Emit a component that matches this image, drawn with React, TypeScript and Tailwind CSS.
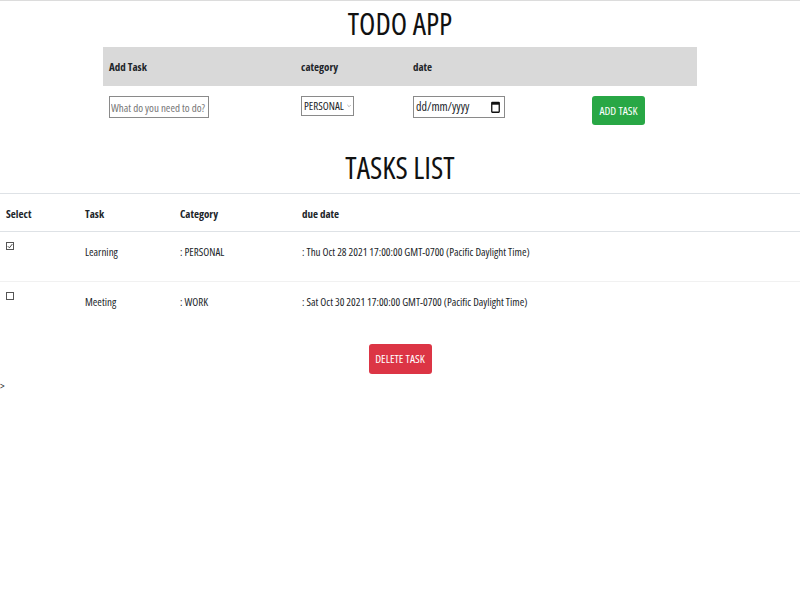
import { useState } from "react";

const font = { fontFamily: '"Open Sans", "DejaVu Sans Condensed", sans-serif' };

interface Task {
  id: number;
  name: string;
  category: string;
  due: string;
  done: boolean;
}

const initial: Task[] = [
  { id: 1, name: "Learning", category: "PERSONAL", due: "Thu Oct 28 2021 17:00:00 GMT-0700 (Pacific Daylight Time)", done: true },
  { id: 2, name: "Meeting", category: "WORK", due: "Sat Oct 30 2021 17:00:00 GMT-0700 (Pacific Daylight Time)", done: false },
];

export default function App() {
  const [tasks, setTasks] = useState(initial);

  return (
    <div className="min-h-[600px] bg-white text-[11px] text-[#212529] font-stretch-condensed" style={font}>
      <div className="border-t border-[#dcdcdc]" />

      {/* Add task form */}
      <h1 className="mt-[3px] text-center text-[30px] leading-[40px] text-[#111]">TODO APP</h1>
      <div className="mx-auto mt-[3px] w-[594px]">
        <div className="grid h-[39px] grid-cols-[192px_112px_179px_1fr] items-center bg-[#d9d9d9] px-[6px] pt-[2px] font-bold">
          <span>Add Task</span>
          <span>category</span>
          <span>date</span>
          <span />
        </div>
        <div className="grid grid-cols-[192px_112px_179px_1fr] items-start px-[6px] pt-[10px]">
          <input
            placeholder="What do you need to do?"
            className="h-[22px] w-[100px] border border-[#8a8a8a] px-[1px] text-[11px] font-stretch-condensed placeholder:text-[#767676]"
          />
          <div className="flex h-[20px] w-[53px] items-center gap-[3px] border border-[#8a8a8a] px-[2px]">
            <span>PERSONAL</span>
            <svg width="6" height="4" viewBox="0 0 6 4">
              <path d="M0.5 0.5 L3 3 L5.5 0.5" fill="none" stroke="#888" strokeWidth="0.9" />
            </svg>
          </div>
          <div className="flex h-[22px] w-[92px] items-center justify-between border border-[#8a8a8a] pl-[2px] pr-[4px]">
            <span className="text-[12px]">dd/mm/yyyy</span>
            <svg width="9" height="12" viewBox="0 0 9 12">
              <rect x="0.75" y="1.5" width="7.5" height="9.75" rx="0.5" fill="none" stroke="#111" strokeWidth="1.3" />
              <rect x="0.75" y="1.5" width="7.5" height="2.2" fill="#111" />
            </svg>
          </div>
          <button className="h-[29px] w-[53px] rounded-[3px] bg-[#28a745] text-[11.5px] text-white">ADD TASK</button>
        </div>
      </div>

      {/* Tasks table */}
      <h2 className="mt-[23px] text-center text-[30px] leading-[40px] text-[#111]">TASKS LIST</h2>
      <div className="mt-[5px] border-t border-[#dee2e6]">
        <div className="grid h-[38px] grid-cols-[79px_95px_122px_1fr] items-center border-b border-[#dee2e6] px-[6px] pt-[3px] font-bold">
          <span>Select</span>
          <span>Task</span>
          <span>Category</span>
          <span>due date</span>
        </div>
        {tasks.map((t) => (
          <div key={t.id} className="grid h-[50px] grid-cols-[79px_95px_122px_1fr] border-b border-[#f1f1f1] px-[6px] last:border-b-0">
            <button
              onClick={() => setTasks(tasks.map((x) => (x.id === t.id ? { ...x, done: !x.done } : x)))}
              className="mt-[10px] flex h-[8px] w-[8px] items-center justify-center border border-[#555] bg-white"
            >
              {t.done && (
                <svg width="6" height="6" viewBox="0 0 6 6">
                  <path d="M0.8 3.2 L2.4 4.8 L5.4 1" fill="none" stroke="#333" strokeWidth="0.9" />
                </svg>
              )}
            </button>
            <span className="pt-[12px]">{t.name}</span>
            <span className="pt-[12px]">: {t.category}</span>
            <span className="pt-[12px]">: {t.due}</span>
          </div>
        ))}
      </div>
      <div className="mt-[12px] flex justify-center">
        <button className="h-[30px] w-[63px] rounded-[3px] bg-[#dc3545] text-[11.5px] text-white">DELETE TASK</button>
      </div>
      <div className="mt-[5px] text-[11px] leading-[14px]">&gt;</div>
    </div>
  );
}
